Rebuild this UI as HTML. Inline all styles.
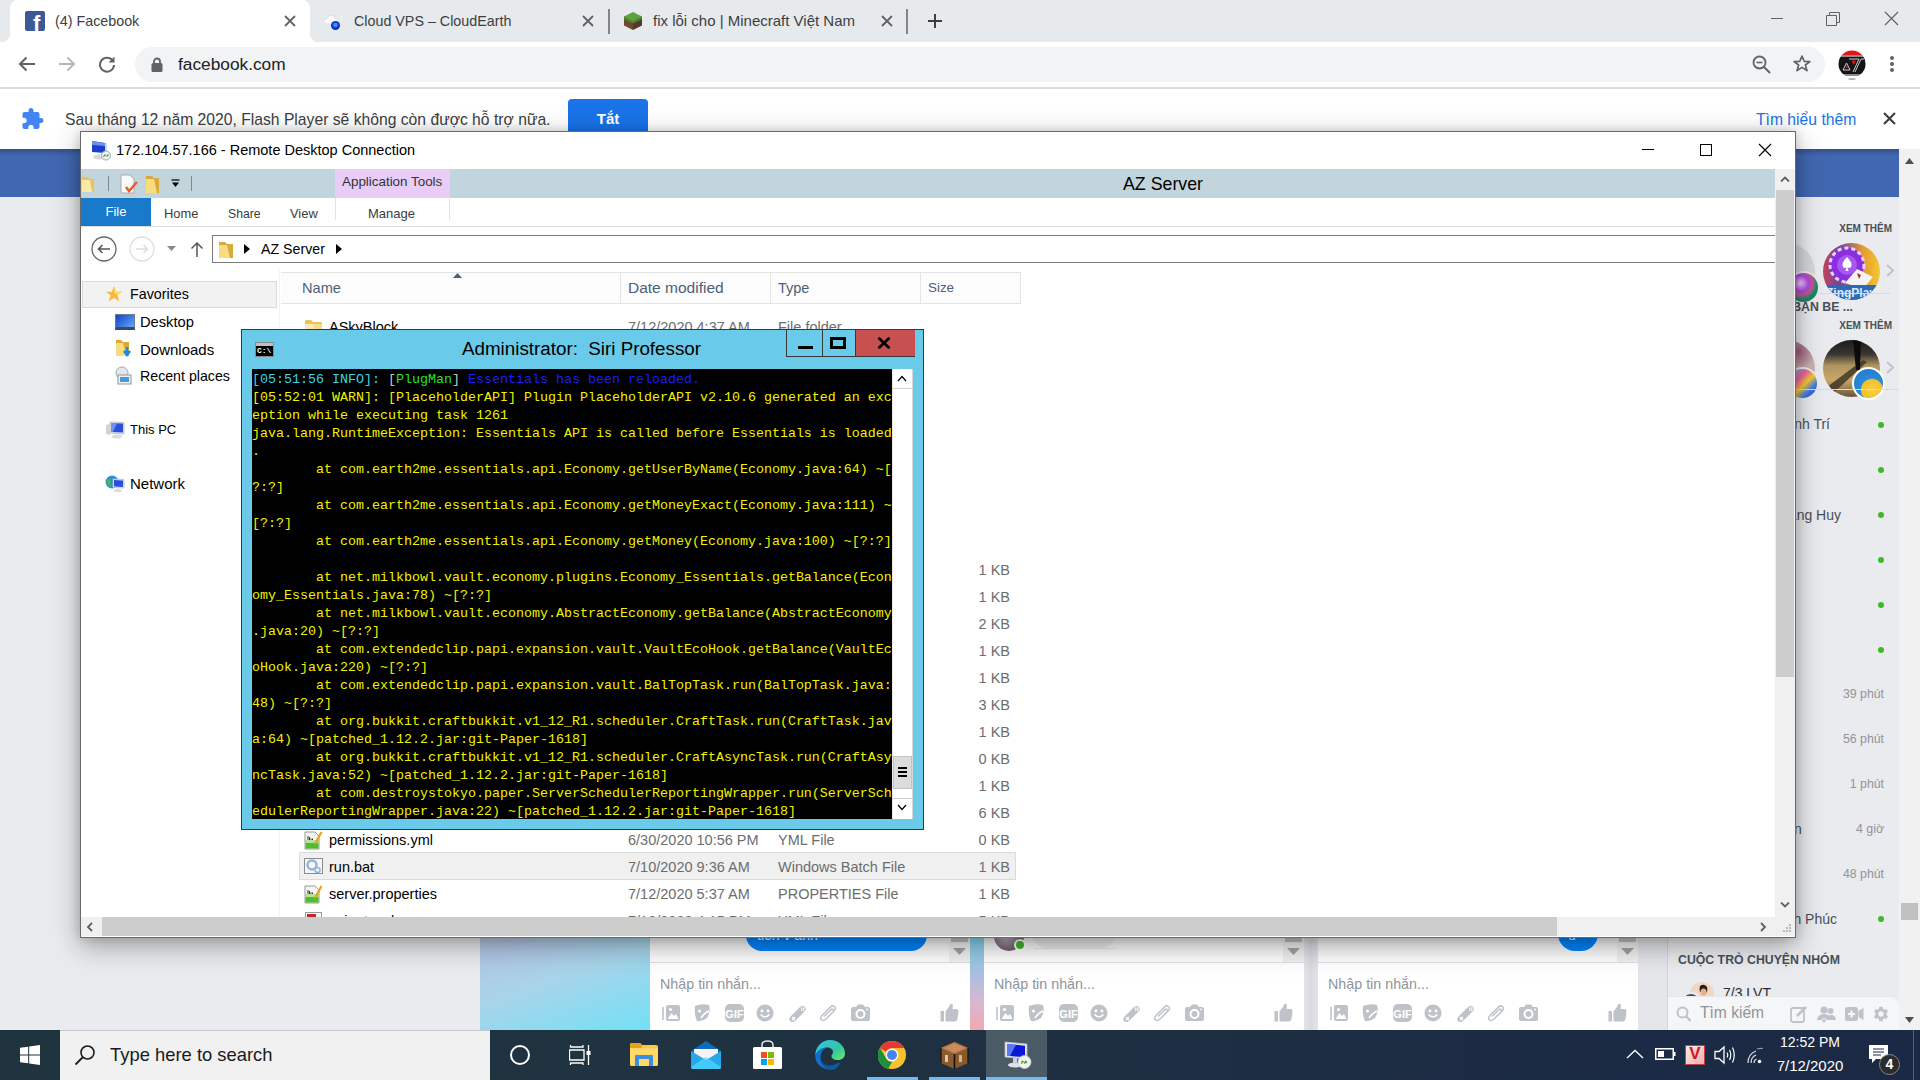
<!DOCTYPE html>
<html><head><meta charset="utf-8">
<style>
*{margin:0;padding:0;box-sizing:border-box}
html,body{width:1920px;height:1080px;overflow:hidden;background:#e9ebee;font-family:"Liberation Sans",sans-serif;position:relative}
.a{position:absolute}
.t{position:absolute;white-space:nowrap}
svg{display:block}
</style></head><body>

<!-- ============ CHROME TAB STRIP ============ -->
<div class="a" style="left:0;top:0;width:1920px;height:42px;background:#e7eaed"></div>
<!-- active tab -->
<div class="a" style="left:10px;top:0;width:300px;height:42px;background:#fff;border-radius:8px 8px 0 0"></div>
<div class="a" style="left:2px;top:34px;width:8px;height:8px;background:#fff"></div>
<div class="a" style="left:2px;top:34px;width:8px;height:8px;background:#e7eaed;border-radius:0 0 8px 0"></div>
<div class="a" style="left:310px;top:34px;width:8px;height:8px;background:#fff"></div>
<div class="a" style="left:310px;top:34px;width:8px;height:8px;background:#e7eaed;border-radius:0 0 0 8px"></div>
<!-- fb favicon -->
<div class="a" style="left:25px;top:11px;width:20px;height:20px;background:#3b5998;border-radius:2px;overflow:hidden">
  <div class="t" style="left:8px;top:1px;font:bold 22px/24px 'Liberation Sans';color:#fff">f</div>
</div>
<div class="t" style="left:55px;top:11px;font-size:14.3px;line-height:20px;color:#3c4043">(4) Facebook</div>
<svg class="a" style="left:284px;top:15px" width="12" height="12" viewBox="0 0 12 12"><path d="M1 1L11 11M11 1L1 11" stroke="#5f6368" stroke-width="1.8"/></svg>
<!-- tab 2 -->
<svg class="a" style="left:323px;top:12px" width="24" height="20" viewBox="0 0 24 20"><path d="M3 12Q0.5 12 0.8 9Q1.2 6.5 4 6.8Q5 3 9 3.5Q12 4 12.5 7Q15 6.5 15.5 9Q15.5 12 13 12Z" fill="#fcfcfc" stroke="#d8d8d8" stroke-width="0.8"/><path d="M17.5 3Q20 5.5 17.5 9" fill="none" stroke="#f4f6f8" stroke-width="1.2"/><circle cx="12.5" cy="13.5" r="4.5" fill="#0a36c8"/><circle cx="12.5" cy="13" r="2.3" fill="#4a8cf0"/></svg>
<div class="t" style="left:354px;top:11px;font-size:14.3px;line-height:20px;color:#3c4043">Cloud VPS – CloudEarth</div>
<svg class="a" style="left:582px;top:15px" width="12" height="12" viewBox="0 0 12 12"><path d="M1 1L11 11M11 1L1 11" stroke="#5f6368" stroke-width="1.8"/></svg>
<div class="a" style="left:608px;top:9px;width:2px;height:25px;background:#80868b"></div>
<!-- tab 3 -->
<svg class="a" style="left:623px;top:11px" width="20" height="20" viewBox="0 0 20 20"><path d="M10 1L19 5.5L10 10L1 5.5Z" fill="#5da33b"/><path d="M1 5.5L10 10V19L1 14.5Z" fill="#6b4a2e"/><path d="M19 5.5L10 10V19L19 14.5Z" fill="#54392a"/><path d="M1 5.5L10 10L19 5.5V8L10 12.5L1 8Z" fill="#4b8a2e"/></svg>
<div class="t" style="left:653px;top:11px;font-size:15px;line-height:20px;color:#3c4043">fix lỗi cho | Minecraft Việt Nam</div>
<svg class="a" style="left:881px;top:15px" width="12" height="12" viewBox="0 0 12 12"><path d="M1 1L11 11M11 1L1 11" stroke="#5f6368" stroke-width="1.8"/></svg>
<div class="a" style="left:906px;top:9px;width:2px;height:25px;background:#80868b"></div>
<svg class="a" style="left:927px;top:13px" width="16" height="16" viewBox="0 0 16 16"><path d="M8 1V15M1 8H15" stroke="#3c4043" stroke-width="2"/></svg>
<!-- window controls -->
<div class="a" style="left:1771px;top:18px;width:12px;height:1px;background:#5f6368"></div>
<svg class="a" style="left:1826px;top:12px" width="14" height="14" viewBox="0 0 14 14"><path d="M0.5 3.5H10.5V13.5H0.5Z M3.5 3.5V0.5H13.5V10.5H10.5" fill="none" stroke="#5f6368" stroke-width="1"/></svg>
<svg class="a" style="left:1884px;top:11px" width="15" height="15" viewBox="0 0 15 15"><path d="M1 1L14 14M14 1L1 14" stroke="#5f6368" stroke-width="1.2"/></svg>

<!-- ============ TOOLBAR ============ -->
<div class="a" style="left:0;top:42px;width:1920px;height:46px;background:#fff"></div>
<svg class="a" style="left:18px;top:56px" width="18" height="16" viewBox="0 0 18 16"><path d="M17 8H2M8.5 1.5L2 8L8.5 14.5" fill="none" stroke="#5f6368" stroke-width="2"/></svg>
<svg class="a" style="left:58px;top:56px" width="18" height="16" viewBox="0 0 18 16"><path d="M1 8H16M9.5 1.5L16 8L9.5 14.5" fill="none" stroke="#b5b8bb" stroke-width="2"/></svg>
<svg class="a" style="left:98px;top:55px" width="18" height="18" viewBox="0 0 18 18"><path d="M14.6 5.5A7 7 0 1 0 16 10" fill="none" stroke="#5f6368" stroke-width="2"/><path d="M16.5 1.5V7.5H10.5Z" fill="#5f6368"/></svg>
<div class="a" style="left:135px;top:47px;width:1690px;height:35px;background:#f1f3f4;border-radius:17.5px"></div>
<svg class="a" style="left:151px;top:57px" width="12" height="15" viewBox="0 0 12 15"><path d="M3 6V4.5A3 3 0 0 1 9 4.5V6" fill="none" stroke="#5f6368" stroke-width="1.8"/><rect x="0.5" y="6" width="11" height="9" rx="1.5" fill="#5f6368"/></svg>
<div class="t" style="left:178px;top:53px;font-size:17.3px;line-height:22px;color:#202124">facebook.com</div>
<svg class="a" style="left:1752px;top:55px" width="20" height="20" viewBox="0 0 20 20"><circle cx="7.5" cy="7.5" r="6" fill="none" stroke="#5f6368" stroke-width="1.8"/><path d="M12 12L18 18" stroke="#5f6368" stroke-width="2"/><path d="M4.5 7.5H10.5" stroke="#5f6368" stroke-width="1.6"/></svg>
<svg class="a" style="left:1792px;top:54px" width="20" height="20" viewBox="0 0 24 24"><path d="M12 2.5L14.8 9H21.5L16 13.2L18 20L12 16L6 20L8 13.2L2.5 9H9.2Z" fill="none" stroke="#5f6368" stroke-width="2" stroke-linejoin="round"/></svg>
<svg class="a" style="left:1838px;top:50px" width="28" height="30" viewBox="0 0 28 30"><defs><clipPath id="avc"><circle cx="14" cy="14" r="13.5"/></clipPath></defs><g clip-path="url(#avc)"><rect x="0" y="0" width="28" height="28" fill="#fff"/><rect x="0" y="0" width="28" height="5" fill="#e8141c"/><rect x="0" y="5" width="28" height="2" fill="#8a8a8a"/><path d="M0 7H28V24H0Z" fill="#151515"/><path d="M3 24H26V26H6Z" fill="#8a8a8a"/><path d="M5 20L8.5 13L12 20Z" fill="none" stroke="#ddd" stroke-width="0.9"/><path d="M7.3 18L8.5 15.5L9.7 18Z" fill="#e8141c"/><path d="M11 9H21L15 22" fill="none" stroke="#ddd" stroke-width="0.9"/><path d="M13.5 10.5H18L15.5 15Z" fill="#e8141c"/><path d="M17 22L23 9H26" fill="none" stroke="#ddd" stroke-width="0.9"/></g><ellipse cx="14" cy="29" rx="4" ry="0.8" fill="#999"/></svg>
<div class="a" style="left:1890px;top:56px;width:4px;height:4px;border-radius:50%;background:#5f6368"></div>
<div class="a" style="left:1890px;top:62px;width:4px;height:4px;border-radius:50%;background:#5f6368"></div>
<div class="a" style="left:1890px;top:68px;width:4px;height:4px;border-radius:50%;background:#5f6368"></div>
<div class="a" style="left:0;top:87px;width:1920px;height:2px;background:#dadce0"></div>

<!-- ============ INFOBAR ============ -->
<div class="a" style="left:0;top:89px;width:1920px;height:60px;background:#fff"></div>
<svg class="a" style="left:20px;top:107px" width="25" height="24" viewBox="0 0 24 24"><path d="M20.5 11H19V7c0-1.1-.9-2-2-2h-4V3.5C13 2.12 11.88 1 10.5 1S8 2.12 8 3.5V5H4c-1.1 0-1.99.9-1.99 2v3.8H3.5c1.49 0 2.7 1.21 2.7 2.7s-1.21 2.7-2.7 2.7H2V20c0 1.1.9 2 2 2h3.8v-1.5c0-1.49 1.21-2.7 2.7-2.7 1.49 0 2.7 1.21 2.7 2.7V22H17c1.1 0 2-.9 2-2v-4h1.5c1.38 0 2.5-1.12 2.5-2.5S21.88 11 20.5 11z" fill="#4285f4"/></svg>
<div class="t" style="left:65px;top:109px;font-size:15.7px;line-height:22px;color:#3c4043">Sau tháng 12 năm 2020, Flash Player sẽ không còn được hỗ trợ nữa.</div>
<div class="a" style="left:568px;top:99px;width:80px;height:40px;background:#1a73e8;border-radius:4px"></div>
<div class="t" style="left:568px;top:108px;width:80px;text-align:center;font:bold 15px/22px 'Liberation Sans';color:#fff">Tắt</div>
<div class="t" style="left:1756px;top:109px;font-size:15.7px;line-height:22px;color:#1a73e8">Tìm hiểu thêm</div>
<svg class="a" style="left:1883px;top:112px" width="13" height="13" viewBox="0 0 13 13"><path d="M1 1L12 12M12 1L1 12" stroke="#3c4043" stroke-width="2.2"/></svg>

<!-- ============ FACEBOOK PAGE ============ -->
<div class="a" style="left:0;top:149px;width:1899px;height:48px;background:#4267b2"></div>
<!-- chrome scrollbar -->
<div class="a" style="left:1899px;top:149px;width:21px;height:881px;background:#f1f1f1"></div>
<svg class="a" style="left:1904px;top:157px" width="11" height="8" viewBox="0 0 11 8"><path d="M5.5 1L10 7H1Z" fill="#505050"/></svg>
<svg class="a" style="left:1904px;top:1016px" width="11" height="8" viewBox="0 0 11 8"><path d="M5.5 7L10 1H1Z" fill="#505050"/></svg>
<div class="a" style="left:1901px;top:903px;width:17px;height:17px;background:#c1c1c1"></div>

<div class="a" style="left:0;top:149px;width:1899px;height:7px;background:linear-gradient(180deg,rgba(0,0,0,0.22),rgba(0,0,0,0))"></div>
<!-- ============ FB SIDEBAR (right) ============ -->
<div class="t" style="left:1792px;top:219px;width:100px;text-align:right;font:bold 10px/20px 'Liberation Sans';color:#4b4f56">XEM THÊM</div>
<div class="a" style="left:1758px;top:243px;width:57px;height:57px;border-radius:50%;background:#d4d6da"></div>
<div class="a" style="left:1787px;top:271px;width:33px;height:33px;border-radius:50%;background:radial-gradient(circle at 40% 35%,#f0d0ff 0,#b048e0 30%,#c05890 48%,#1f8a6a 62%,#1a6a58 100%);border:2px solid #e9ebee"></div>
<svg class="a" style="left:1823px;top:243px" width="57" height="57" viewBox="0 0 57 57"><defs><clipPath id="zpc"><circle cx="28.5" cy="28.5" r="28.5"/></clipPath><linearGradient id="zpg" x1="0" y1="0" x2="1" y2="0"><stop offset="0" stop-color="#c8405a"/><stop offset="0.3" stop-color="#6a4aa0"/><stop offset="0.7" stop-color="#e89a30"/><stop offset="1" stop-color="#f2c832"/></linearGradient></defs><g clip-path="url(#zpc)"><rect width="57" height="57" fill="url(#zpg)"/><circle cx="24" cy="22" r="17" fill="#8a2ee0"/><circle cx="24" cy="22" r="17" fill="none" stroke="#e8d0ff" stroke-width="3" stroke-dasharray="4 3"/><circle cx="24" cy="22" r="10" fill="#a858f0"/><path d="M24 14Q30 20 28 24Q26 26 24.5 24L25.5 28H22.5L23.5 24Q22 26 20 24Q18 20 24 14Z" fill="#fff"/><path d="M22 40L34 26L50 34L40 46Z" fill="#f4f4f4"/><path d="M34 30L38 32L36 36Z" fill="#c02020"/><rect x="0" y="42" width="57" height="15" fill="#2a6ab8"/><text x="28" y="54" text-anchor="middle" font-family="Liberation Sans" font-weight="bold" font-size="12" fill="#dfe8ff">ZingPlay</text></g></svg>
<svg class="a" style="left:1886px;top:264px" width="8" height="13" viewBox="0 0 8 13"><path d="M1 1L7 6.5L1 12" fill="none" stroke="#bec2c9" stroke-width="2"/></svg>
<div class="a" style="left:1819px;top:293px;width:71px;height:1px;background:#d8dade"></div>
<div class="t" style="left:1753px;top:299px;width:100px;text-align:right;font:bold 12.3px/16px 'Liberation Sans';color:#4b4f56">BẠN BE ...</div>
<div class="t" style="left:1792px;top:316px;width:100px;text-align:right;font:bold 10px/20px 'Liberation Sans';color:#4b4f56">XEM THÊM</div>
<div class="a" style="left:1758px;top:340px;width:57px;height:57px;border-radius:50%;background:radial-gradient(circle at 70% 20%,#9a5a7a 0,#c8b0b0 30%,#d8c8c8 100%)"></div>
<div class="a" style="left:1786px;top:367px;width:33px;height:33px;border-radius:50%;background:linear-gradient(135deg,#30d0f0 0%,#f060a0 35%,#f8c830 55%,#3a7ae8 75%,#4a30c0 100%);border:2px solid #e9ebee"></div>
<svg class="a" style="left:1823px;top:340px" width="57" height="57" viewBox="0 0 57 57"><defs><clipPath id="npc"><circle cx="28.5" cy="28.5" r="28.5"/></clipPath><linearGradient id="npg" x1="0" y1="0" x2="0" y2="1"><stop offset="0" stop-color="#1c1c1c"/><stop offset="0.25" stop-color="#3a3630"/><stop offset="0.45" stop-color="#b09460"/><stop offset="0.7" stop-color="#c8a868"/><stop offset="1" stop-color="#6a5438"/></linearGradient></defs><g clip-path="url(#npc)"><rect width="57" height="57" fill="url(#npg)"/><path d="M0 50L40 20L44 22L6 57Z" fill="#3a3226" opacity="0.8"/><path d="M30 0H38L37 30H33Z" fill="#0c0c0c"/></g></svg>
<div class="a" style="left:1852px;top:367px;width:33px;height:33px;border-radius:50%;background:radial-gradient(circle at 62% 72%,#f8d040 0,#f2c030 38%,#2a8ad8 42%,#1a78c8 100%);border:2px solid #fff"></div>
<svg class="a" style="left:1886px;top:361px" width="8" height="13" viewBox="0 0 8 13"><path d="M1 1L7 6.5L1 12" fill="none" stroke="#bec2c9" stroke-width="2"/></svg>
<div class="a" style="left:1796px;top:389px;width:103px;height:1px;background:#d8dade"></div>

<div class="t" style="left:1730px;top:415px;width:100px;text-align:right;font-size:14px;line-height:18px;color:#4b4f56">Thanh Trí</div>
<div class="t" style="left:1741px;top:506px;width:100px;text-align:right;font-size:14px;line-height:18px;color:#4b4f56">Hoàng Huy</div>
<div class="t" style="left:1794px;top:820px;font-size:14px;line-height:18px;color:#4b4f56">n</div>
<div class="t" style="left:1737px;top:910px;width:100px;text-align:right;font-size:14px;line-height:18px;color:#4b4f56">Minh Phúc</div>
<div class="a" style="left:1878px;top:422px;width:6px;height:6px;border-radius:50%;background:#42b72a"></div>
<div class="a" style="left:1878px;top:467px;width:6px;height:6px;border-radius:50%;background:#42b72a"></div>
<div class="a" style="left:1878px;top:512px;width:6px;height:6px;border-radius:50%;background:#42b72a"></div>
<div class="a" style="left:1878px;top:557px;width:6px;height:6px;border-radius:50%;background:#42b72a"></div>
<div class="a" style="left:1878px;top:602px;width:6px;height:6px;border-radius:50%;background:#42b72a"></div>
<div class="a" style="left:1878px;top:647px;width:6px;height:6px;border-radius:50%;background:#42b72a"></div>
<div class="a" style="left:1878px;top:916px;width:6px;height:6px;border-radius:50%;background:#42b72a"></div>
<div class="t" style="left:1784px;top:686px;width:100px;text-align:right;font-size:12.3px;line-height:16px;color:#90949c">39 phút</div>
<div class="t" style="left:1784px;top:731px;width:100px;text-align:right;font-size:12.3px;line-height:16px;color:#90949c">56 phút</div>
<div class="t" style="left:1784px;top:776px;width:100px;text-align:right;font-size:12.3px;line-height:16px;color:#90949c">1 phút</div>
<div class="t" style="left:1784px;top:821px;width:100px;text-align:right;font-size:12.3px;line-height:16px;color:#90949c">4 giờ</div>
<div class="t" style="left:1784px;top:866px;width:100px;text-align:right;font-size:12.3px;line-height:16px;color:#90949c">48 phút</div>

<!-- bottom sidebar panel -->
<div class="a" style="left:1638px;top:937px;width:30px;height:93px;background:#e4e6ea"></div>
<div class="a" style="left:1667px;top:937px;width:1px;height:93px;background:#d3d6db"></div>
<div class="t" style="left:1678px;top:952px;font:bold 12.3px/16px 'Liberation Sans';color:#4b4f56">CUỘC TRÒ CHUYỆN NHÓM</div>
<svg class="a" style="left:1690px;top:982px" width="24" height="24" viewBox="0 0 24 24"><defs><clipPath id="gac"><circle cx="12" cy="12" r="12"/></clipPath></defs><g clip-path="url(#gac)"><rect width="24" height="24" fill="#f2d6c0"/><path d="M10 4Q14 1 17 5Q18 9 16 11L10 10Q9 7 10 4Z" fill="#2a1e18"/><ellipse cx="13.5" cy="10" rx="3" ry="3.5" fill="#e8b090"/><path d="M7 24Q8 15 13.5 15Q19 15 20 24Z" fill="#e89a80"/></g></svg>
<div class="a" style="left:1680px;top:992px;width:22px;height:22px;border-radius:50%;background:linear-gradient(180deg,#3a4660,#a8b0c0);border:2px solid #e9ebee"></div>
<div class="t" style="left:1723px;top:984px;font-size:14px;line-height:18px;color:#2a2d33">7/3 LVT</div>
<div class="a" style="left:1668px;top:997px;width:231px;height:33px;background:#f5f6f7;border-radius:0 8px 0 0;box-shadow:0 -1px 0 #e5e6e9"></div>
<svg class="a" style="left:1676px;top:1006px" width="16" height="17" viewBox="0 0 16 17"><circle cx="6.5" cy="6.5" r="5" fill="none" stroke="#bec2c9" stroke-width="2"/><path d="M10 10L14.5 15" stroke="#bec2c9" stroke-width="2.2"/></svg>
<div class="t" style="left:1700px;top:1003px;font-size:15.6px;line-height:20px;color:#90949c">Tìm kiếm</div>
<svg class="a" style="left:1790px;top:1005px" width="18" height="18" viewBox="0 0 18 18"><rect x="1" y="3" width="13" height="14" rx="2" fill="none" stroke="#bec2c9" stroke-width="1.8"/><path d="M7 11L16 2" stroke="#bec2c9" stroke-width="2.5"/></svg>
<svg class="a" style="left:1817px;top:1005px" width="19" height="18" viewBox="0 0 19 18"><circle cx="7" cy="5" r="3.5" fill="#bec2c9"/><circle cx="13.5" cy="6" r="3" fill="#bec2c9"/><path d="M0 15Q1 9 7 9Q13 9 13.5 15Z" fill="#bec2c9"/><path d="M10 11Q13 9.5 16 10Q19 12 19 15H12Z" fill="#bec2c9"/><path d="M7 13V18M4.5 15.5H9.5" stroke="#f5f6f7" stroke-width="3"/><path d="M7 13.5V17.5M5 15.5H9" stroke="#bec2c9" stroke-width="1.6"/></svg>
<svg class="a" style="left:1845px;top:1006px" width="19" height="16" viewBox="0 0 19 16"><rect x="0" y="1" width="13" height="14" rx="2.5" fill="#bec2c9"/><path d="M13.5 5L18.5 2V14L13.5 11Z" fill="#bec2c9"/><path d="M6.5 4.5V11.5M3 8H10" stroke="#f5f6f7" stroke-width="2.2"/></svg>
<svg class="a" style="left:1872px;top:1005px" width="18" height="18" viewBox="0 0 24 24"><path d="M19.14 12.94c.04-.3.06-.61.06-.94 0-.32-.02-.64-.07-.94l2.03-1.58c.18-.14.23-.41.12-.61l-1.92-3.32c-.12-.22-.37-.29-.59-.22l-2.39.96c-.5-.38-1.03-.7-1.62-.94l-.36-2.54c-.04-.24-.24-.41-.48-.41h-3.84c-.24 0-.43.17-.47.41l-.36 2.54c-.59.24-1.13.57-1.62.94l-2.39-.96c-.22-.08-.47 0-.59.22L2.74 8.87c-.12.21-.08.47.12.61l2.03 1.58c-.05.3-.09.63-.09.94s.02.64.07.94l-2.03 1.58c-.18.14-.23.41-.12.61l1.92 3.32c.12.22.37.29.59.22l2.39-.96c.5.38 1.03.7 1.62.94l.36 2.54c.05.24.24.41.48.41h3.84c.24 0 .44-.17.47-.41l.36-2.54c.59-.24 1.13-.56 1.62-.94l2.39.96c.22.08.47 0 .59-.22l1.92-3.32c.12-.22.07-.47-.12-.61l-2.01-1.58zM12 15.6c-1.98 0-3.6-1.62-3.6-3.6s1.62-3.6 3.6-3.6 3.6 1.62 3.6 3.6-1.62 3.6-3.6 3.6z" fill="#bec2c9"/></svg>


<!-- ============ FB CHATS ============ -->
<div class="a" style="left:480px;top:937px;width:170px;height:93px;background:linear-gradient(160deg,#b6c3e2 0%,#a8d4ea 45%,#72e0f6 100%)"></div>
<div class="a" style="left:650px;top:937px;width:320px;height:93px;background:#fff"></div>
<div class="a" style="left:650px;top:937px;width:320px;height:26px;background:linear-gradient(180deg,#f2f3f5 0%,#fbfbfc 45%,#fff 100%)"></div>
<div class="a" style="left:949px;top:937px;width:21px;height:26px;background:#f1f1f1"></div>
<div class="a" style="left:951px;top:937px;width:17px;height:5px;background:#c1c1c1"></div>
<svg class="a" style="left:953px;top:948px" width="13" height="7" viewBox="0 0 13 7"><path d="M0 0H13L6.5 7Z" fill="#a3a3a3"/></svg>
<div class="a" style="left:650px;top:962px;width:320px;height:1px;background:#dddfe2"></div>
<div class="t" style="left:660px;top:974px;font-size:14.3px;line-height:20px;color:#90949c">Nhập tin nhắn...</div>

<svg class="a" style="left:662px;top:1004px" width="19" height="18" viewBox="0 0 19 18"><path d="M1 3V16" stroke="#bec3c9" stroke-width="1.6"/><rect x="4" y="1" width="14" height="16" rx="2" fill="#bec3c9"/><path d="M5.5 15L9.5 9L12 12L14 10L16.5 15Z" fill="#fff"/><circle cx="8.5" cy="5.5" r="1.6" fill="#fff"/></svg>
<svg class="a" style="left:693px;top:1003px" width="18" height="19" viewBox="0 0 18 19"><path d="M2 3Q9 0 16 2Q18 9 14 15Q9 19 4 18Q1 12 2 3Z" fill="#bec3c9"/><circle cx="6.5" cy="8" r="1.5" fill="#fff"/><path d="M8 15Q11 10 16 8" stroke="#fff" stroke-width="1.5" fill="none"/></svg>
<svg class="a" style="left:725px;top:1004px" width="19" height="18" viewBox="0 0 19 18"><rect x="0" y="0" width="19" height="18" rx="5" fill="#bec3c9"/><text x="9.5" y="13.5" text-anchor="middle" font-family="Liberation Sans" font-weight="bold" font-size="11" fill="#fff">GIF</text></svg>
<svg class="a" style="left:756px;top:1004px" width="18" height="18" viewBox="0 0 18 18"><circle cx="9" cy="9" r="8.5" fill="#bec3c9"/><circle cx="6" cy="7" r="1.4" fill="#fff"/><circle cx="12" cy="7" r="1.4" fill="#fff"/><path d="M4.5 10.5Q9 15 13.5 10.5" fill="none" stroke="#fff" stroke-width="1.5"/></svg>
<svg class="a" style="left:788px;top:1004px" width="19" height="19" viewBox="0 0 19 19"><path d="M3 12L12 3Q15 1 17 3Q19 6 16 8L7 17Q4 19 2 17Q0 15 3 12Z" fill="#bec3c9"/><path d="M4 13L7 16M7 13L4 16" stroke="#fff" stroke-width="1.2"/><rect x="13" y="3.5" width="1.4" height="1.4" fill="#fff"/><rect x="15" y="3.5" width="1.4" height="1.4" fill="#fff"/><rect x="13" y="5.5" width="1.4" height="1.4" fill="#fff"/><rect x="15" y="5.5" width="1.4" height="1.4" fill="#fff"/></svg>
<svg class="a" style="left:819px;top:1004px" width="19" height="18" viewBox="0 0 19 18"><path d="M7 15L15.5 6.5Q17.5 4 15.5 2.5Q13.5 1 11.5 3L3 11.5Q0.5 14.5 2.5 16Q4.5 17.5 7 15L14 8Q15 6.5 14 5.5Q13 4.5 11.5 6L5 12.5" fill="none" stroke="#bec3c9" stroke-width="1.5"/></svg>
<svg class="a" style="left:851px;top:1004px" width="19" height="17" viewBox="0 0 19 17"><path d="M0 5Q0 3 2 3H5L7 0.5H12L14 3H17Q19 3 19 5V15Q19 17 17 17H2Q0 17 0 15Z" fill="#bec3c9"/><circle cx="9.5" cy="10" r="4" fill="none" stroke="#fff" stroke-width="2"/><circle cx="16" cy="5.5" r="0.9" fill="#fff"/></svg>
<svg class="a" style="left:940px;top:1003px" width="19" height="19" viewBox="0 0 19 19"><rect x="0.5" y="8" width="3.5" height="10.5" fill="#bec3c9"/><path d="M5.5 8.5L9.5 3Q10 0 12 0.8Q13.5 1.5 12.5 6H16.5Q19 6.5 18.5 9L17.5 16Q17 18.5 14.5 18.5H5.5Z" fill="#bec3c9"/></svg>

<div class="a" style="left:970px;top:937px;width:14px;height:93px;background:linear-gradient(180deg,#86d4ea 0%,#a8c0e0 40%,#d8b8d0 70%,#f0a8b0 100%)"></div>
<div class="a" style="left:984px;top:937px;width:320px;height:93px;background:#fff"></div>
<div class="a" style="left:984px;top:937px;width:320px;height:26px;background:linear-gradient(180deg,#f2f3f5 0%,#fbfbfc 45%,#fff 100%)"></div>
<div class="a" style="left:1283px;top:937px;width:21px;height:26px;background:#f1f1f1"></div>
<div class="a" style="left:1285px;top:937px;width:17px;height:5px;background:#c1c1c1"></div>
<svg class="a" style="left:1287px;top:948px" width="13" height="7" viewBox="0 0 13 7"><path d="M0 0H13L6.5 7Z" fill="#a3a3a3"/></svg>
<div class="a" style="left:984px;top:962px;width:320px;height:1px;background:#dddfe2"></div>
<div class="t" style="left:994px;top:974px;font-size:14.3px;line-height:20px;color:#90949c">Nhập tin nhắn...</div>

<svg class="a" style="left:996px;top:1004px" width="19" height="18" viewBox="0 0 19 18"><path d="M1 3V16" stroke="#bec3c9" stroke-width="1.6"/><rect x="4" y="1" width="14" height="16" rx="2" fill="#bec3c9"/><path d="M5.5 15L9.5 9L12 12L14 10L16.5 15Z" fill="#fff"/><circle cx="8.5" cy="5.5" r="1.6" fill="#fff"/></svg>
<svg class="a" style="left:1027px;top:1003px" width="18" height="19" viewBox="0 0 18 19"><path d="M2 3Q9 0 16 2Q18 9 14 15Q9 19 4 18Q1 12 2 3Z" fill="#bec3c9"/><circle cx="6.5" cy="8" r="1.5" fill="#fff"/><path d="M8 15Q11 10 16 8" stroke="#fff" stroke-width="1.5" fill="none"/></svg>
<svg class="a" style="left:1059px;top:1004px" width="19" height="18" viewBox="0 0 19 18"><rect x="0" y="0" width="19" height="18" rx="5" fill="#bec3c9"/><text x="9.5" y="13.5" text-anchor="middle" font-family="Liberation Sans" font-weight="bold" font-size="11" fill="#fff">GIF</text></svg>
<svg class="a" style="left:1090px;top:1004px" width="18" height="18" viewBox="0 0 18 18"><circle cx="9" cy="9" r="8.5" fill="#bec3c9"/><circle cx="6" cy="7" r="1.4" fill="#fff"/><circle cx="12" cy="7" r="1.4" fill="#fff"/><path d="M4.5 10.5Q9 15 13.5 10.5" fill="none" stroke="#fff" stroke-width="1.5"/></svg>
<svg class="a" style="left:1122px;top:1004px" width="19" height="19" viewBox="0 0 19 19"><path d="M3 12L12 3Q15 1 17 3Q19 6 16 8L7 17Q4 19 2 17Q0 15 3 12Z" fill="#bec3c9"/><path d="M4 13L7 16M7 13L4 16" stroke="#fff" stroke-width="1.2"/><rect x="13" y="3.5" width="1.4" height="1.4" fill="#fff"/><rect x="15" y="3.5" width="1.4" height="1.4" fill="#fff"/><rect x="13" y="5.5" width="1.4" height="1.4" fill="#fff"/><rect x="15" y="5.5" width="1.4" height="1.4" fill="#fff"/></svg>
<svg class="a" style="left:1153px;top:1004px" width="19" height="18" viewBox="0 0 19 18"><path d="M7 15L15.5 6.5Q17.5 4 15.5 2.5Q13.5 1 11.5 3L3 11.5Q0.5 14.5 2.5 16Q4.5 17.5 7 15L14 8Q15 6.5 14 5.5Q13 4.5 11.5 6L5 12.5" fill="none" stroke="#bec3c9" stroke-width="1.5"/></svg>
<svg class="a" style="left:1185px;top:1004px" width="19" height="17" viewBox="0 0 19 17"><path d="M0 5Q0 3 2 3H5L7 0.5H12L14 3H17Q19 3 19 5V15Q19 17 17 17H2Q0 17 0 15Z" fill="#bec3c9"/><circle cx="9.5" cy="10" r="4" fill="none" stroke="#fff" stroke-width="2"/><circle cx="16" cy="5.5" r="0.9" fill="#fff"/></svg>
<svg class="a" style="left:1274px;top:1003px" width="19" height="19" viewBox="0 0 19 19"><rect x="0.5" y="8" width="3.5" height="10.5" fill="#bec3c9"/><path d="M5.5 8.5L9.5 3Q10 0 12 0.8Q13.5 1.5 12.5 6H16.5Q19 6.5 18.5 9L17.5 16Q17 18.5 14.5 18.5H5.5Z" fill="#bec3c9"/></svg>

<div class="a" style="left:1304px;top:937px;width:14px;height:93px;background:linear-gradient(90deg,#e3e4e8,#d8dade 50%,#e3e4e8)"></div>
<div class="a" style="left:1318px;top:937px;width:320px;height:93px;background:#fff"></div>
<div class="a" style="left:1318px;top:937px;width:320px;height:26px;background:linear-gradient(180deg,#f2f3f5 0%,#fbfbfc 45%,#fff 100%)"></div>
<div class="a" style="left:1617px;top:937px;width:21px;height:26px;background:#f1f1f1"></div>
<div class="a" style="left:1619px;top:937px;width:17px;height:5px;background:#c1c1c1"></div>
<svg class="a" style="left:1621px;top:948px" width="13" height="7" viewBox="0 0 13 7"><path d="M0 0H13L6.5 7Z" fill="#a3a3a3"/></svg>
<div class="a" style="left:1318px;top:962px;width:320px;height:1px;background:#dddfe2"></div>
<div class="t" style="left:1328px;top:974px;font-size:14.3px;line-height:20px;color:#90949c">Nhập tin nhắn...</div>

<svg class="a" style="left:1330px;top:1004px" width="19" height="18" viewBox="0 0 19 18"><path d="M1 3V16" stroke="#bec3c9" stroke-width="1.6"/><rect x="4" y="1" width="14" height="16" rx="2" fill="#bec3c9"/><path d="M5.5 15L9.5 9L12 12L14 10L16.5 15Z" fill="#fff"/><circle cx="8.5" cy="5.5" r="1.6" fill="#fff"/></svg>
<svg class="a" style="left:1361px;top:1003px" width="18" height="19" viewBox="0 0 18 19"><path d="M2 3Q9 0 16 2Q18 9 14 15Q9 19 4 18Q1 12 2 3Z" fill="#bec3c9"/><circle cx="6.5" cy="8" r="1.5" fill="#fff"/><path d="M8 15Q11 10 16 8" stroke="#fff" stroke-width="1.5" fill="none"/></svg>
<svg class="a" style="left:1393px;top:1004px" width="19" height="18" viewBox="0 0 19 18"><rect x="0" y="0" width="19" height="18" rx="5" fill="#bec3c9"/><text x="9.5" y="13.5" text-anchor="middle" font-family="Liberation Sans" font-weight="bold" font-size="11" fill="#fff">GIF</text></svg>
<svg class="a" style="left:1424px;top:1004px" width="18" height="18" viewBox="0 0 18 18"><circle cx="9" cy="9" r="8.5" fill="#bec3c9"/><circle cx="6" cy="7" r="1.4" fill="#fff"/><circle cx="12" cy="7" r="1.4" fill="#fff"/><path d="M4.5 10.5Q9 15 13.5 10.5" fill="none" stroke="#fff" stroke-width="1.5"/></svg>
<svg class="a" style="left:1456px;top:1004px" width="19" height="19" viewBox="0 0 19 19"><path d="M3 12L12 3Q15 1 17 3Q19 6 16 8L7 17Q4 19 2 17Q0 15 3 12Z" fill="#bec3c9"/><path d="M4 13L7 16M7 13L4 16" stroke="#fff" stroke-width="1.2"/><rect x="13" y="3.5" width="1.4" height="1.4" fill="#fff"/><rect x="15" y="3.5" width="1.4" height="1.4" fill="#fff"/><rect x="13" y="5.5" width="1.4" height="1.4" fill="#fff"/><rect x="15" y="5.5" width="1.4" height="1.4" fill="#fff"/></svg>
<svg class="a" style="left:1487px;top:1004px" width="19" height="18" viewBox="0 0 19 18"><path d="M7 15L15.5 6.5Q17.5 4 15.5 2.5Q13.5 1 11.5 3L3 11.5Q0.5 14.5 2.5 16Q4.5 17.5 7 15L14 8Q15 6.5 14 5.5Q13 4.5 11.5 6L5 12.5" fill="none" stroke="#bec3c9" stroke-width="1.5"/></svg>
<svg class="a" style="left:1519px;top:1004px" width="19" height="17" viewBox="0 0 19 17"><path d="M0 5Q0 3 2 3H5L7 0.5H12L14 3H17Q19 3 19 5V15Q19 17 17 17H2Q0 17 0 15Z" fill="#bec3c9"/><circle cx="9.5" cy="10" r="4" fill="none" stroke="#fff" stroke-width="2"/><circle cx="16" cy="5.5" r="0.9" fill="#fff"/></svg>
<svg class="a" style="left:1608px;top:1003px" width="19" height="19" viewBox="0 0 19 19"><rect x="0.5" y="8" width="3.5" height="10.5" fill="#bec3c9"/><path d="M5.5 8.5L9.5 3Q10 0 12 0.8Q13.5 1.5 12.5 6H16.5Q19 6.5 18.5 9L17.5 16Q17 18.5 14.5 18.5H5.5Z" fill="#bec3c9"/></svg>

<div class="a" style="left:746px;top:917px;width:181px;height:34px;border-radius:16px;background:#0084ff"></div>
<div class="t" style="left:757px;top:926px;font-size:14px;line-height:18px;color:#fff">tiền v anh</div>
<div class="a" style="left:1558px;top:917px;width:40px;height:34px;border-radius:17px;background:#0084ff"></div>
<div class="t" style="left:1568px;top:926px;font-size:14px;line-height:18px;color:#fff">ừ</div>
<div class="a" style="left:1033px;top:919px;width:82px;height:29px;border-radius:14px;background:#ececec"></div>
<div class="a" style="left:1033px;top:948px;width:82px;height:1px;background:#e4e6eb"></div>
<div class="a" style="left:994px;top:921px;width:30px;height:30px;border-radius:50%;background:radial-gradient(circle at 40% 40%,#d8d0d8,#7a6a78 60%,#4a3a48)"></div>
<div class="a" style="left:1014px;top:939px;width:12px;height:12px;border-radius:50%;background:#42b72a;border:2px solid #fff"></div>

<!-- ============ RDP WINDOW ============ -->
<div class="a" style="left:80px;top:131px;width:1716px;height:807px;background:#fff;border:1px solid #6a6a6a;box-shadow:0 8px 26px rgba(0,0,0,0.34),0 0 10px rgba(0,0,0,0.14)"></div>
<!-- title bar -->
<svg class="a" style="left:90px;top:140px" width="22" height="21" viewBox="0 0 22 21"><path d="M2 1L15 3V13L2 12Z" fill="#1a3fc9"/><path d="M2 1L15 3V6L2 5Z" fill="#6f8df0"/><path d="M15 3L17 2.5V13.5L15 13Z" fill="#cfd6e6"/><ellipse cx="9" cy="17" rx="6" ry="2.5" fill="#d8d8d8"/><circle cx="16" cy="15.5" r="4.5" fill="#f2f2f2" stroke="#9aa" stroke-width="1"/><path d="M13.5 16.5L15.5 14.5M16.5 16.5L18.5 14.5" stroke="#3aa03a" stroke-width="1.2"/></svg>
<div class="t" style="left:116px;top:140px;font-size:14.5px;line-height:20px;color:#000">172.104.57.166 - Remote Desktop Connection</div>
<div class="a" style="left:1642px;top:149px;width:12px;height:1px;background:#000"></div>
<div class="a" style="left:1700px;top:144px;width:12px;height:12px;border:1px solid #000"></div>
<svg class="a" style="left:1758px;top:143px" width="14" height="14" viewBox="0 0 14 14"><path d="M1 1L13 13M13 1L1 13" stroke="#000" stroke-width="1.1"/></svg>

<!-- quick access toolbar -->
<div class="a" style="left:81px;top:169px;width:1694px;height:29px;background:#c3d5dc"></div>
<svg class="a" style="left:82px;top:175px" width="14" height="18" viewBox="0 0 14 18"><path d="M0 2H6L8 4H12V17H0Z" fill="#e8c35a"/><path d="M0 5H8L10 17H0Z" fill="#fbe9a8"/></svg>
<div class="a" style="left:108px;top:176px;width:1px;height:15px;background:#7d8a90"></div>
<svg class="a" style="left:120px;top:174px" width="19" height="20" viewBox="0 0 19 20"><path d="M1 1H10L14 5V19H1Z" fill="#fafafa" stroke="#aaa" stroke-width="1"/><path d="M6 13L9 17L17 8" fill="none" stroke="#e65c2c" stroke-width="2.5"/></svg>
<svg class="a" style="left:145px;top:174px" width="16" height="20" viewBox="0 0 16 20"><path d="M1 2H7L9 4H14V19H1Z" fill="#d9a93a"/><path d="M1 5H9L12 19H1Z" fill="#f8dc80"/></svg>
<svg class="a" style="left:171px;top:179px" width="9" height="9" viewBox="0 0 9 9"><path d="M0.5 1H8.5" stroke="#000" stroke-width="1.2"/><path d="M1 3.5H8L4.5 8Z" fill="#000"/></svg>
<div class="a" style="left:191px;top:176px;width:1px;height:15px;background:#7d8a90"></div>
<div class="a" style="left:335px;top:169px;width:115px;height:29px;background:#e8cdf9"></div>
<div class="t" style="left:342px;top:172px;font-size:13.4px;line-height:20px;color:#333">Application Tools</div>
<div class="t" style="left:1123px;top:173px;font-size:17.8px;line-height:22px;color:#000">AZ Server</div>

<!-- ribbon tabs -->
<div class="a" style="left:81px;top:198px;width:70px;height:28px;background:#1979ca"></div>
<div class="t" style="left:81px;top:202px;width:70px;text-align:center;font-size:13px;line-height:20px;color:#fff">File</div>
<div class="t" style="left:164px;top:204px;font-size:12.9px;line-height:20px;color:#3b3b3b">Home</div>
<div class="t" style="left:228px;top:204px;font-size:12.2px;line-height:20px;color:#3b3b3b">Share</div>
<div class="t" style="left:290px;top:204px;font-size:12.9px;line-height:20px;color:#3b3b3b">View</div>
<div class="t" style="left:368px;top:204px;font-size:13px;line-height:20px;color:#3b3b3b">Manage</div>
<div class="a" style="left:335px;top:198px;width:1px;height:22px;background:#e2e3e4"></div>
<div class="a" style="left:449px;top:198px;width:1px;height:22px;background:#e2e3e4"></div>
<div class="a" style="left:81px;top:226px;width:1694px;height:1px;background:#dadbdc"></div>

<!-- address row -->
<svg class="a" style="left:91px;top:236px" width="26" height="26" viewBox="0 0 26 26"><circle cx="13" cy="13" r="12" fill="none" stroke="#666" stroke-width="1.3"/><path d="M19 13H7.5M11.5 9L7.5 13L11.5 17" fill="none" stroke="#555" stroke-width="1.6"/></svg>
<svg class="a" style="left:129px;top:236px" width="26" height="26" viewBox="0 0 26 26"><circle cx="13" cy="13" r="12" fill="none" stroke="#dedede" stroke-width="1.3"/><path d="M7 13H18.5M14.5 9L18.5 13L14.5 17" fill="none" stroke="#dedede" stroke-width="1.6"/></svg>
<svg class="a" style="left:167px;top:246px" width="9" height="5" viewBox="0 0 9 5"><path d="M0 0H9L4.5 5Z" fill="#8a8a8a"/></svg>
<svg class="a" style="left:190px;top:241px" width="14" height="17" viewBox="0 0 14 17"><path d="M7 16V2M1.5 7.5L7 2L12.5 7.5" fill="none" stroke="#555" stroke-width="1.5"/></svg>
<div class="a" style="left:212px;top:235px;width:1563px;height:28px;border:1px solid #7a7a7a;border-right:none;background:#fff"></div>
<svg class="a" style="left:218px;top:240px" width="18" height="19" viewBox="0 0 18 19"><path d="M1 2H7L9 4H15V18H1Z" fill="#d9a93a"/><path d="M1 5H9L12 18H1Z" fill="#f8dc80"/></svg>
<svg class="a" style="left:244px;top:244px" width="6" height="10" viewBox="0 0 6 10"><path d="M0 0L6 5L0 10Z" fill="#000"/></svg>
<div class="t" style="left:261px;top:238px;font-size:14.2px;line-height:22px;color:#000">AZ Server</div>
<svg class="a" style="left:336px;top:244px" width="6" height="10" viewBox="0 0 6 10"><path d="M0 0L6 5L0 10Z" fill="#000"/></svg>

<!-- nav pane -->
<div class="a" style="left:279px;top:270px;width:1px;height:647px;background:#f2f2f2"></div>
<div class="a" style="left:82px;top:281px;width:195px;height:27px;background:#f2f2f2;border:1px solid #dadada"></div>
<svg class="a" style="left:105px;top:284px" width="18" height="20" viewBox="0 0 24 24"><path d="M12 1.5L15 9H23L16.5 13.8L19 22L12 17L5 22L7.5 13.8L1 9H9Z" fill="#f6b93b"/><path d="M12 1.5L15 9H23L16.5 13.8L12 10Z" fill="#fcd96a"/></svg>
<div class="t" style="left:130px;top:281px;font-size:14.3px;line-height:27px;color:#000">Favorites</div>
<div class="a" style="left:115px;top:314px;width:20px;height:16px;background:linear-gradient(135deg,#1a3fc0,#3d7ee8 60%,#6aa8f0);border:1px solid #6a7a90;border-bottom:3px solid #3a4a60"></div>
<div class="t" style="left:140px;top:309px;font-size:14.7px;line-height:27px;color:#000">Desktop</div>
<svg class="a" style="left:115px;top:338px" width="20" height="21" viewBox="0 0 20 21"><path d="M1 2H6L8 4H14V18H1Z" fill="#d9a93a"/><path d="M1 5H8L11 18H1Z" fill="#f8dc80"/><path d="M12 9V15M9 13L12 17L15 13" fill="none" stroke="#1e88e5" stroke-width="2.5"/></svg>
<div class="t" style="left:140px;top:336px;font-size:15px;line-height:27px;color:#000">Downloads</div>
<svg class="a" style="left:114px;top:366px" width="21" height="20" viewBox="0 0 21 20"><circle cx="8" cy="7" r="6" fill="#e4e8ec" stroke="#a0a8b0"/><rect x="4" y="9" width="13" height="9" fill="#eef2f6" stroke="#8a96a2"/><rect x="6" y="11" width="9" height="5" fill="#4a9ad8"/></svg>
<div class="t" style="left:140px;top:363px;font-size:14.2px;line-height:27px;color:#000">Recent places</div>
<svg class="a" style="left:105px;top:420px" width="20" height="19" viewBox="0 0 20 19"><path d="M5 2L19 2.5V14L5 13Z" fill="#e8ecf0" stroke="#b0b8c0" stroke-width="0.8"/><path d="M6 3L18 3.5V12.5L6 12Z" fill="#2b4fd8"/><path d="M6 3L12 3.3L8 12H6Z" fill="#6f90f2"/><path d="M1 5L5 4V15L1 14Z" fill="#d0d4d8"/><ellipse cx="12" cy="16.5" rx="5" ry="2" fill="#dcdcdc"/></svg>
<div class="t" style="left:130px;top:416px;font-size:13px;line-height:27px;color:#000">This PC</div>
<svg class="a" style="left:105px;top:473px" width="20" height="20" viewBox="0 0 20 20"><circle cx="7" cy="9" r="6.5" fill="#2f8fd8"/><path d="M2 6Q5 5 6 8Q4 11 7 14Q3 13 1.5 10Z" fill="#49b84a"/><path d="M8 6L19 6.5V15L8 14.5Z" fill="#e8ecf0" stroke="#b0b8c0" stroke-width="0.8"/><path d="M9 7L18 7.4V14L9 13.6Z" fill="#2b4fd8"/><ellipse cx="13" cy="17.5" rx="4" ry="1.6" fill="#dcdcdc"/></svg>
<div class="t" style="left:130px;top:470px;font-size:15px;line-height:27px;color:#000">Network</div>

<!-- column headers -->
<div class="a" style="left:281px;top:272px;width:740px;height:32px;background:#fcfcfc;border-top:1px solid #e5e5e5;border-bottom:1px solid #e5e5e5;border-right:1px solid #e5e5e5"></div>
<div class="a" style="left:620px;top:273px;width:1px;height:30px;background:#e5e5e5"></div>
<div class="a" style="left:770px;top:273px;width:1px;height:30px;background:#e5e5e5"></div>
<div class="a" style="left:920px;top:273px;width:1px;height:30px;background:#e5e5e5"></div>
<svg class="a" style="left:453px;top:273px" width="9" height="5" viewBox="0 0 9 5"><path d="M4.5 0L9 5H0Z" fill="#4c607a"/></svg>
<div class="t" style="left:302px;top:276px;font-size:14.6px;line-height:24px;color:#4c607a">Name</div>
<div class="t" style="left:628px;top:276px;font-size:15.5px;line-height:24px;color:#4c607a">Date modified</div>
<div class="t" style="left:778px;top:276px;font-size:14.5px;line-height:24px;color:#4c607a">Type</div>
<div class="t" style="left:928px;top:276px;font-size:13.4px;line-height:24px;color:#4c607a">Size</div>

<div class="a" style="left:299px;top:852px;width:717px;height:28px;background:#f0f0f0;border:1px solid #dadada"></div>
<svg class="a" style="left:304px;top:319px" width="19" height="17" viewBox="0 0 19 17"><path d="M1 2.5Q1 1 2.5 1H7L9 3H16.5Q18 3 18 4.5V15Q18 16 17 16H2Q1 16 1 15Z" fill="#e8c35a"/><path d="M1 5H18V15Q18 16 17 16H2Q1 16 1 15Z" fill="#f6dc8a"/><path d="M1 5H9L11 16H2Q1 16 1 15Z" fill="#fbeab0"/></svg>
<div class="t" style="left:329px;top:314px;font-size:14.5px;line-height:27px;color:#000;">ASkyBlock</div>
<div class="t" style="left:628px;top:314px;font-size:14.5px;line-height:27px;color:#6d6d6d;">7/12/2020 4:37 AM</div>
<div class="t" style="left:778px;top:314px;font-size:14.5px;line-height:27px;color:#6d6d6d;">File folder</div>
<div class="t" style="left:910px;top:557px;width:100px;text-align:right;font-size:14.5px;line-height:27px;color:#6d6d6d">1 KB</div>
<div class="t" style="left:910px;top:584px;width:100px;text-align:right;font-size:14.5px;line-height:27px;color:#6d6d6d">1 KB</div>
<div class="t" style="left:910px;top:611px;width:100px;text-align:right;font-size:14.5px;line-height:27px;color:#6d6d6d">2 KB</div>
<div class="t" style="left:910px;top:638px;width:100px;text-align:right;font-size:14.5px;line-height:27px;color:#6d6d6d">1 KB</div>
<div class="t" style="left:910px;top:665px;width:100px;text-align:right;font-size:14.5px;line-height:27px;color:#6d6d6d">1 KB</div>
<div class="t" style="left:910px;top:692px;width:100px;text-align:right;font-size:14.5px;line-height:27px;color:#6d6d6d">3 KB</div>
<div class="t" style="left:910px;top:719px;width:100px;text-align:right;font-size:14.5px;line-height:27px;color:#6d6d6d">1 KB</div>
<div class="t" style="left:910px;top:746px;width:100px;text-align:right;font-size:14.5px;line-height:27px;color:#6d6d6d">0 KB</div>
<div class="t" style="left:910px;top:773px;width:100px;text-align:right;font-size:14.5px;line-height:27px;color:#6d6d6d">1 KB</div>
<div class="t" style="left:910px;top:800px;width:100px;text-align:right;font-size:14.5px;line-height:27px;color:#6d6d6d">6 KB</div>
<div class="t" style="left:910px;top:827px;width:100px;text-align:right;font-size:14.5px;line-height:27px;color:#6d6d6d">0 KB</div>
<div class="t" style="left:910px;top:854px;width:100px;text-align:right;font-size:14.5px;line-height:27px;color:#6d6d6d">1 KB</div>
<div class="t" style="left:910px;top:881px;width:100px;text-align:right;font-size:14.5px;line-height:27px;color:#6d6d6d">1 KB</div>
<div class="t" style="left:910px;top:908px;width:100px;text-align:right;font-size:14.5px;line-height:27px;color:#6d6d6d">5 KB</div>
<svg class="a" style="left:304px;top:831px" width="19" height="19" viewBox="0 0 19 19"><path d="M1 1H11L15 5V18H1Z" fill="#f4f4f4" stroke="#9a9a9a" stroke-width="1"/><path d="M1.5 9H14.5V17.5H1.5Z" fill="#4cbf2e"/><path d="M1.5 9H14.5V12H1.5Z" fill="#b6e39a"/><path d="M4 5V9M5.5 6V9M7 7.5V9M8.5 7.5V9" stroke="#333" stroke-width="1"/><path d="M17.5 1L11 13" stroke="#e8a21c" stroke-width="2.2"/></svg>
<div class="t" style="left:329px;top:827px;font-size:14.5px;line-height:27px;color:#000;">permissions.yml</div>
<div class="t" style="left:628px;top:827px;font-size:14.5px;line-height:27px;color:#6d6d6d;">6/30/2020 10:56 PM</div>
<div class="t" style="left:778px;top:827px;font-size:14.5px;line-height:27px;color:#6d6d6d;">YML File</div>
<svg class="a" style="left:304px;top:858px" width="19" height="16" viewBox="0 0 19 16"><rect x="0.5" y="0.5" width="18" height="15" fill="#f6f6f6" stroke="#8c8c8c"/><circle cx="8" cy="7" r="4.5" fill="none" stroke="#8fb6dc" stroke-width="2.5"/><circle cx="13.5" cy="12" r="2.5" fill="none" stroke="#8fb6dc" stroke-width="1.5"/></svg>
<div class="t" style="left:329px;top:854px;font-size:14.5px;line-height:27px;color:#000;">run.bat</div>
<div class="t" style="left:628px;top:854px;font-size:14.5px;line-height:27px;color:#6d6d6d;">7/10/2020 9:36 AM</div>
<div class="t" style="left:778px;top:854px;font-size:14.5px;line-height:27px;color:#6d6d6d;">Windows Batch File</div>
<svg class="a" style="left:304px;top:885px" width="19" height="19" viewBox="0 0 19 19"><path d="M1 1H11L15 5V18H1Z" fill="#f4f4f4" stroke="#9a9a9a" stroke-width="1"/><path d="M1.5 9H14.5V17.5H1.5Z" fill="#4cbf2e"/><path d="M1.5 9H14.5V12H1.5Z" fill="#b6e39a"/><path d="M4 5V9M5.5 6V9M7 7.5V9M8.5 7.5V9" stroke="#333" stroke-width="1"/><path d="M17.5 1L11 13" stroke="#e8a21c" stroke-width="2.2"/></svg>
<div class="t" style="left:329px;top:881px;font-size:14.5px;line-height:27px;color:#000;">server.properties</div>
<div class="t" style="left:628px;top:881px;font-size:14.5px;line-height:27px;color:#6d6d6d;">7/12/2020 5:37 AM</div>
<div class="t" style="left:778px;top:881px;font-size:14.5px;line-height:27px;color:#6d6d6d;">PROPERTIES File</div>
<div class="a" style="left:305px;top:912px;width:17px;height:19px;background:#f4f4f4;border:1px solid #9a9a9a"><div class="a" style="left:1px;top:1px;width:9px;height:5px;background:#c0282a"></div></div>
<div class="t" style="left:329px;top:908px;font-size:14.5px;line-height:27px;color:#000;">spigot.yml</div>
<div class="t" style="left:628px;top:908px;font-size:14.5px;line-height:27px;color:#6d6d6d;">7/12/2020 4:15 PM</div>
<div class="t" style="left:778px;top:908px;font-size:14.5px;line-height:27px;color:#6d6d6d;">YML File</div>

<!-- vertical scrollbar -->
<div class="a" style="left:1775px;top:169px;width:20px;height:748px;background:#f0f0f0"></div>
<div class="a" style="left:1776px;top:190px;width:18px;height:487px;background:#cdcdcd"></div>
<svg class="a" style="left:1780px;top:176px" width="10" height="6" viewBox="0 0 10 6"><path d="M1 5.5L5 1.5L9 5.5" fill="none" stroke="#606060" stroke-width="1.8"/></svg>
<svg class="a" style="left:1780px;top:902px" width="10" height="6" viewBox="0 0 10 6"><path d="M1 0.5L5 4.5L9 0.5" fill="none" stroke="#606060" stroke-width="1.8"/></svg>
<!-- horizontal scrollbar -->
<div class="a" style="left:81px;top:917px;width:1714px;height:19px;background:#f0f0f0"></div>
<div class="a" style="left:102px;top:917px;width:1455px;height:19px;background:#cdcdcd"></div>
<svg class="a" style="left:86px;top:922px" width="7" height="10" viewBox="0 0 7 10"><path d="M6 1L2 5L6 9" fill="none" stroke="#606060" stroke-width="1.8"/></svg>
<svg class="a" style="left:1760px;top:922px" width="7" height="10" viewBox="0 0 7 10"><path d="M1 1L5 5L1 9" fill="none" stroke="#606060" stroke-width="1.8"/></svg>
<svg class="a" style="left:1781px;top:924px" width="11" height="11" viewBox="0 0 11 11"><g fill="#b8b8b8"><rect x="8" y="0" width="2" height="2"/><rect x="5" y="3" width="2" height="2"/><rect x="8" y="3" width="2" height="2"/><rect x="2" y="6" width="2" height="2"/><rect x="5" y="6" width="2" height="2"/><rect x="8" y="6" width="2" height="2"/></g></svg>


<!-- ============ CONSOLE WINDOW ============ -->
<div class="a" style="left:241px;top:329px;width:683px;height:501px;background:#69caea;border:1px solid #383838"></div>
<div class="a" style="left:255px;top:342px;width:19px;height:15px;background:#000;border:1px solid #8a8a8a"><div class="a" style="left:0;top:0;width:17px;height:3px;background:#c0c0c0"></div><div class="t" style="left:1px;top:3px;font:bold 8px/10px 'Liberation Mono';color:#fff">C:\</div></div>
<div class="t" style="left:462px;top:337px;font-size:18.8px;line-height:24px;color:#000">Administrator:&nbsp; Siri Professor</div>
<div class="a" style="left:786px;top:330px;width:37px;height:27px;background:#69caea;border:1px solid #383838;border-top:none"></div>
<div class="a" style="left:823px;top:330px;width:32px;height:27px;background:#69caea;border-bottom:1px solid #383838"></div><div class="a" style="left:855px;top:330px;width:1px;height:27px;background:#383838"></div>
<div class="a" style="left:856px;top:330px;width:59px;height:27px;background:#c75050;border-bottom:1px solid #383838"></div>
<div class="a" style="left:798px;top:346px;width:15px;height:3px;background:#000"></div>
<div class="a" style="left:830px;top:337px;width:16px;height:12px;border:3px solid #000;border-top-width:3.5px"></div>
<svg class="a" style="left:877px;top:337px" width="14" height="12" viewBox="0 0 14 12"><path d="M1.5 0.8L12.5 11.2M12.5 0.8L1.5 11.2" stroke="#000" stroke-width="2.8"/></svg>
<div class="a" style="left:252px;top:369px;width:640px;height:450px;background:#000;overflow:hidden"><pre style="margin:0;position:relative;top:2px;font-family:'Liberation Mono',monospace;font-size:13.333px;line-height:18px;color:#f2f200;white-space:pre"><span style="color:#3ad6e8">[05:51:56 INFO]: </span><span style="color:#c8c8c8">[</span><span style="color:#2ee02e">PlugMan</span><span style="color:#c8c8c8">]</span><span style="color:#1c1cff"> Essentials has been reloaded.</span>
[05:52:01 WARN]: [PlaceholderAPI] Plugin PlaceholderAPI v2.10.6 generated an exc
eption while executing task 1261
java.lang.RuntimeException: Essentials API is called before Essentials is loaded
.
        at com.earth2me.essentials.api.Economy.getUserByName(Economy.java:64) ~[
?:?]
        at com.earth2me.essentials.api.Economy.getMoneyExact(Economy.java:111) ~
[?:?]
        at com.earth2me.essentials.api.Economy.getMoney(Economy.java:100) ~[?:?]
&nbsp;
        at net.milkbowl.vault.economy.plugins.Economy_Essentials.getBalance(Econ
omy_Essentials.java:78) ~[?:?]
        at net.milkbowl.vault.economy.AbstractEconomy.getBalance(AbstractEconomy
.java:20) ~[?:?]
        at com.extendedclip.papi.expansion.vault.VaultEcoHook.getBalance(VaultEc
oHook.java:220) ~[?:?]
        at com.extendedclip.papi.expansion.vault.BalTopTask.run(BalTopTask.java:
48) ~[?:?]
        at org.bukkit.craftbukkit.v1_12_R1.scheduler.CraftTask.run(CraftTask.jav
a:64) ~[patched_1.12.2.jar:git-Paper-1618]
        at org.bukkit.craftbukkit.v1_12_R1.scheduler.CraftAsyncTask.run(CraftAsy
ncTask.java:52) ~[patched_1.12.2.jar:git-Paper-1618]
        at com.destroystokyo.paper.ServerSchedulerReportingWrapper.run(ServerSch
edulerReportingWrapper.java:22) ~[patched_1.12.2.jar:git-Paper-1618]</pre></div>
<!-- console scrollbar -->
<div class="a" style="left:892px;top:369px;width:21px;height:450px;background:#fff;border-right:1px solid #d6d6d6;border-left:1px solid #e8e8e8"></div>
<div class="a" style="left:892px;top:388px;width:21px;height:1px;background:#d0d0d0"></div>
<svg class="a" style="left:897px;top:375px" width="10" height="7" viewBox="0 0 10 7"><path d="M1 6L5 1.5L9 6" fill="none" stroke="#000" stroke-width="1.2"/></svg>
<div class="a" style="left:893px;top:756px;width:19px;height:33px;background:#dcdcdc;border:1px solid #c4c4c4"></div>
<div class="a" style="left:898px;top:767px;width:9px;height:2px;background:#000"></div>
<div class="a" style="left:898px;top:771px;width:9px;height:2px;background:#000"></div>
<div class="a" style="left:898px;top:775px;width:9px;height:2px;background:#000"></div>
<div class="a" style="left:892px;top:798px;width:21px;height:1px;background:#d0d0d0"></div>
<svg class="a" style="left:897px;top:804px" width="10" height="7" viewBox="0 0 10 7"><path d="M1 1L5 5.5L9 1" fill="none" stroke="#000" stroke-width="1.2"/></svg>


<!-- ============ TASKBAR ============ -->
<div class="a" style="left:0;top:1030px;width:1920px;height:50px;background:linear-gradient(90deg,#1f343e 0%,#1f3240 40%,#1c2b44 80%,#1b2946 100%)"></div>

<!-- ============ TASKBAR ICONS ============ -->
<svg class="a" style="left:20px;top:1045px" width="20" height="20" viewBox="0 0 20 20"><path d="M0 2.8L8.2 1.7V9.5H0Z M9.2 1.55L20 0V9.5H9.2Z M0 10.5H8.2V18.3L0 17.2Z M9.2 10.5H20V20L9.2 18.45Z" fill="#fff"/></svg>
<div class="a" style="left:60px;top:1030px;width:430px;height:50px;background:#f1f1f1;border-top:1px solid #c8c8c8"></div>
<svg class="a" style="left:74px;top:1044px" width="22" height="22" viewBox="0 0 22 22"><circle cx="13.5" cy="8.5" r="6.5" fill="none" stroke="#1a1a1a" stroke-width="1.6"/><path d="M9 13L1.5 20.5" stroke="#1a1a1a" stroke-width="1.8"/></svg>
<div class="t" style="left:110px;top:1044px;font-size:18.4px;line-height:22px;color:#1a1a1a">Type here to search</div>
<div class="a" style="left:510px;top:1045px;width:20px;height:20px;border-radius:50%;border:2.2px solid #fff"></div>
<svg class="a" style="left:569px;top:1045px" width="22" height="20" viewBox="0 0 22 20"><path d="M1.5 0V2H14V0 M1.5 20V18H14V20 M0.5 5H15V15H0.5Z M19.5 0V20" fill="none" stroke="#fff" stroke-width="1.3"/><rect x="17.5" y="6" width="4" height="4" fill="#fff"/></svg>
<svg class="a" style="left:630px;top:1043px" width="28" height="23" viewBox="0 0 28 23"><path d="M0 2Q0 0 2 0H10L12 2H26Q28 2 28 4V21Q28 23 26 23H2Q0 23 0 21Z" fill="#ffc83d"/><path d="M0 5H28V21Q28 23 26 23H2Q0 23 0 21Z" fill="#ffd866"/><path d="M0 2Q0 0 2 0H10L12 2V5H0Z" fill="#e8a317"/><path d="M5 23V13Q5 12 6 12H22Q23 12 23 13V23H19V16H9V23Z" fill="#3c8fe0"/></svg>
<svg class="a" style="left:691px;top:1041px" width="30" height="28" viewBox="0 0 30 28"><path d="M0 10L15 0L30 10V26Q30 28 28 28H2Q0 28 0 26Z" fill="#0f6cbd"/><path d="M3 8H27V16L15 22L3 16Z" fill="#f4f4f4"/><path d="M0 10L15 19L30 10V26Q30 28 28 28H2Q0 28 0 26Z" fill="#28a8ea"/><path d="M0 26L15 16L30 26V26Q30 28 28 28H2Q0 28 0 26Z" fill="#50d9ff" opacity="0.7"/></svg>
<svg class="a" style="left:753px;top:1040px" width="29" height="29" viewBox="0 0 29 29"><path d="M9 7V5Q9 1 14.5 1Q20 1 20 5V7" fill="none" stroke="#e8e8e8" stroke-width="1.5"/><rect x="0" y="7" width="29" height="22" rx="1.5" fill="#fff"/><rect x="8" y="12" width="6" height="6" fill="#f25022"/><rect x="15" y="12" width="6" height="6" fill="#7fba00"/><rect x="8" y="19" width="6" height="6" fill="#00a4ef"/><rect x="15" y="19" width="6" height="6" fill="#ffb900"/></svg>
<svg class="a" style="left:815px;top:1040px" width="30" height="30" viewBox="0 0 30 30"><defs><linearGradient id="eg1" x1="0" y1="0" x2="1" y2="1"><stop offset="0" stop-color="#35c1f1"/><stop offset="0.6" stop-color="#34c7a0"/><stop offset="1" stop-color="#66eb6e"/></linearGradient></defs><path d="M15 0C23.5 0 30 6 30 13.5C30 17.5 27 20 23 20C19 20 16.5 18.5 16.5 16C16.5 14.5 18 14 18 12C18 9.5 15.5 7.5 12 7.5C6 7.5 1.5 12 0.3 16C0 7 6.5 0 15 0Z" fill="url(#eg1)"/><path d="M0.3 16C1.5 12 6 7.5 12 7.5C8 9 5.5 13 5.5 17.5C5.5 24.5 11 30 17.5 30C8 30 0 24 0.3 16Z" fill="#1170cf"/><path d="M17.5 30C11 30 5.5 24.5 5.5 17.5C5.5 22 9.5 25.5 14.5 25.5C18 25.5 21 24 23.5 22.5L25 23.5C23 27.5 20 30 17.5 30Z" fill="#0c59a4"/></svg>
<svg class="a" style="left:878px;top:1041px" width="28" height="28" viewBox="0 0 28 28"><circle cx="14" cy="14" r="14" fill="#fbc02d"/><path d="M14 0A14 14 0 0 1 26.1 7H14A7 7 0 0 0 7.9 10.5L1.9 7A14 14 0 0 1 14 0Z" fill="#e53935"/><path d="M1.9 7L7.9 17.5A7 7 0 0 0 14 21L10 28A14 14 0 0 1 1.9 7Z" fill="#43a047"/><path d="M1.9 7A14 14 0 0 0 10 27.4L14 21A7 7 0 0 1 7.9 17.5Z" fill="#1e8e3e"/><circle cx="14" cy="14" r="6.3" fill="#fff"/><circle cx="14" cy="14" r="5" fill="#4285f4"/></svg>
<svg class="a" style="left:940px;top:1041px" width="29" height="29" viewBox="0 0 29 29"><path d="M14.5 1L28 7V22L14.5 28L1 22V7Z" fill="#8a5a2a"/><path d="M1 7L14.5 1L28 7L14.5 13Z" fill="#b8794a"/><path d="M4 7L14.5 2.5L25 7L14.5 11.5Z" fill="#c98c5c"/><path d="M14.5 13V28" stroke="#111" stroke-width="1.6"/><path d="M1 7V22" stroke="#111" stroke-width="1.2"/><path d="M28 7V22" stroke="#111" stroke-width="1.2"/><rect x="5" y="14" width="3" height="7" fill="#d8c8a8"/><rect x="19" y="14" width="3" height="7" fill="#c8b898"/></svg>
<div class="a" style="left:986px;top:1030px;width:61px;height:50px;background:#4b5b66"></div>
<svg class="a" style="left:1002px;top:1040px" width="30" height="30" viewBox="0 0 30 30"><path d="M3 2L25 4V19L3 17Z" fill="#e6e8ec" stroke="#b8bcc4" stroke-width="0.8"/><path d="M5 4L23 5.7V17.3L5 15.8Z" fill="#0a18d8"/><path d="M5 4L14 4.8L8 16H5Z" fill="#5a78f0"/><ellipse cx="13" cy="25" rx="7" ry="2.5" fill="#e0e2e6"/><path d="M11 18V24H15V18" fill="#cfd2d8"/><circle cx="22.5" cy="22" r="6.5" fill="#f2f2f2" stroke="#c8c8c8" stroke-width="0.8"/><path d="M19 23.5L21.5 21M22 23.5L24.5 21M19.5 21L21 22.5M23 21L25 23" stroke="#2faa2f" stroke-width="1.3"/></svg>
<div class="a" style="left:867px;top:1077px;width:51px;height:3px;background:#76b9ed"></div>
<div class="a" style="left:929px;top:1077px;width:51px;height:3px;background:#76b9ed"></div>
<div class="a" style="left:986px;top:1077px;width:61px;height:3px;background:#76b9ed"></div>

<!-- tray -->
<svg class="a" style="left:1626px;top:1049px" width="18" height="10" viewBox="0 0 18 10"><path d="M1 9L9 1.5L17 9" fill="none" stroke="#fff" stroke-width="1.3"/></svg>
<svg class="a" style="left:1655px;top:1048px" width="21" height="12" viewBox="0 0 21 12"><rect x="0.75" y="0.75" width="17.5" height="10.5" fill="none" stroke="#fff" stroke-width="1.5"/><rect x="3" y="3" width="6" height="6" fill="#fff"/><rect x="18.5" y="4" width="2" height="4" fill="#fff"/></svg>
<div class="a" style="left:1685px;top:1045px;width:20px;height:20px;background:linear-gradient(135deg,#fce8e8,#f0b0b0);border:1px solid #c04040"></div>
<div class="t" style="left:1685px;top:1043px;width:20px;text-align:center;font:bold 17px/22px 'Liberation Sans';color:#d01818">V</div>
<svg class="a" style="left:1714px;top:1045px" width="22" height="20" viewBox="0 0 22 20"><path d="M1 6.5H5L10 2V18L5 13.5H1Z" fill="none" stroke="#fff" stroke-width="1.3"/><path d="M13 7.5Q14.5 10 13 12.5M15.5 5Q18 10 15.5 15M18.5 2.5Q22 10 18.5 17.5" fill="none" stroke="#fff" stroke-width="1.2"/></svg>
<svg class="a" style="left:1747px;top:1047px" width="18" height="17" viewBox="0 0 18 17"><path d="M1 16Q1 7 9 4M4 16Q4 10 9 8M7 16Q7 13 9.5 12" fill="none" stroke="#fff" stroke-width="1.2" opacity="0.85"/><path d="M10 2Q13 1 16 1.5" fill="none" stroke="#fff" stroke-width="1.2" opacity="0.5"/><circle cx="12.5" cy="14.5" r="1.8" fill="#fff"/></svg>
<div class="t" style="left:1760px;top:1032px;width:100px;text-align:center;font-size:14px;line-height:20px;color:#fff">12:52 PM</div>
<div class="t" style="left:1760px;top:1056px;width:100px;text-align:center;font-size:15px;line-height:20px;color:#fff">7/12/2020</div>
<svg class="a" style="left:1868px;top:1044px" width="22" height="22" viewBox="0 0 22 22"><path d="M1 1H20V15H8L4 19V15H1Z" fill="#fff"/><path d="M5 5H16M5 8H16M5 11H13" stroke="#1c2a44" stroke-width="1.2"/></svg>
<div class="a" style="left:1879px;top:1054px;width:21px;height:21px;border-radius:50%;background:#2b2b2b;border:1.5px solid #888"></div>
<div class="t" style="left:1879px;top:1054px;width:21px;text-align:center;font:bold 14px/21px 'Liberation Sans';color:#fff">4</div>
<div class="a" style="left:1913px;top:1030px;width:1px;height:50px;background:#55607a"></div>


</body></html>
